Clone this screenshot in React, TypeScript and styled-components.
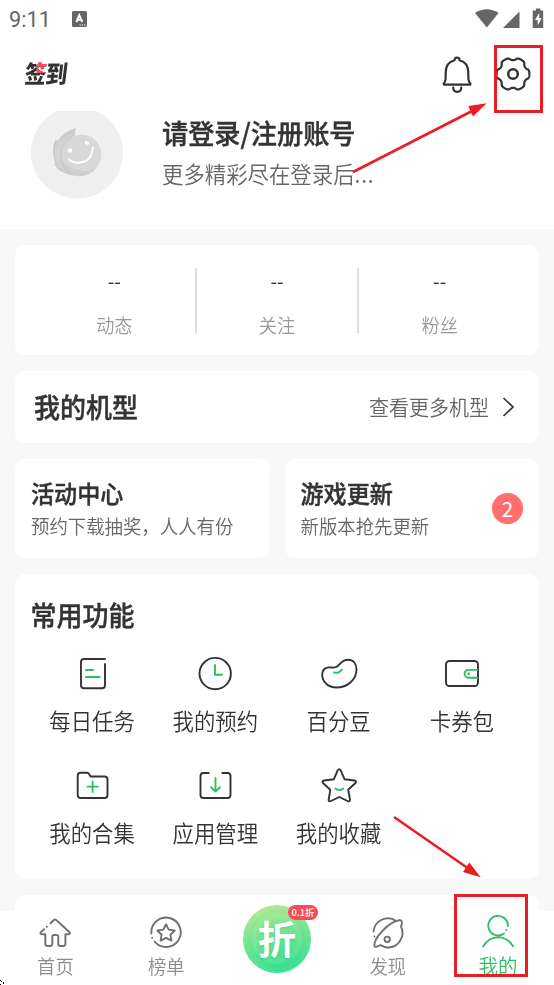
import React from 'react';
import styled, { createGlobalStyle, css } from 'styled-components';

const GlobalStyle = createGlobalStyle`
  * { box-sizing: border-box; }
  body {
    margin: 0;
    background: #f8f8f8;
    color: #333;
    font-family: "Noto Sans CJK SC", sans-serif;
    overflow: hidden;
  }
  svg { display: block; flex: none; }
`;

const GREEN = '#2fbf63';
const INK = '#333333';
const RED = '#ed1c24';

const tall = css`
  display: block;
  white-space: nowrap;
  transform: scaleY(1.05);
`;

const Screen = styled.div`
  position: relative;
  width: 554px;
  height: 985px;
  overflow: hidden;
  display: flex;
  flex-direction: column;
`;

const Header = styled.header`
  height: 229px;
  background: #fff;
  flex: none;
`;

const StatusBar = styled.div`
  height: 38px;
  padding: 0 10px 0 9px;
  display: flex;
  align-items: center;
  justify-content: space-between;
`;

const StatusGroup = styled.div`
  display: flex;
  align-items: center;
  gap: 21px;
`;

const Clock = styled.span`
  padding-top: 2px;
  font: 400 21.7px/36px Roboto, sans-serif;
  color: #666;
`;

const TopBar = styled.div`
  height: 73px;
  padding: 0 22px 0 25px;
  display: flex;
  align-items: center;
  justify-content: space-between;
`;

const SignIn = styled.div`
  margin-bottom: 3px;
  font-size: 21.7px;
  font-weight: 900;
  line-height: 28px;
  letter-spacing: -0.8px;
  transform: skewX(-7deg) scaleY(1.12);
  color: transparent;
  background: linear-gradient(#f5505a, #f5505a) 11px 0 / 11px 14px no-repeat, ${INK};
  -webkit-background-clip: text;
  background-clip: text;
`;

const TopActions = styled.div`
  display: flex;
  gap: 21px;
`;

const Profile = styled.div`
  display: flex;
  padding-left: 31px;
  gap: 39px;
`;

const AvatarClip = styled.div`
  width: 92px;
  height: 88px;
  overflow: hidden;
`;

const ProfileText = styled.div`
  padding-top: 1px;
`;

const Title = styled.h1`
  ${tall}
  margin: 0;
  font-size: 26.2px;
  line-height: 40px;
  font-weight: 500;
  -webkit-text-stroke: 0.4px ${INK};
`;

const Subtitle = styled.p`
  ${tall}
  margin: 0;
  font-size: 21.4px;
  line-height: 43px;
  font-weight: 350;
  color: #666;
`;

const Ellipsis = styled.span`
  letter-spacing: 0.9px;
`;

const Content = styled.main`
  padding: 16px 15px 0;
  display: flex;
  flex-direction: column;
  gap: 16px;
`;

const Card = styled.section<{ $h: number }>`
  flex: 1 1 0;
  min-width: 0;
  min-height: ${p => p.$h}px;
  background: #fff;
  border-radius: 10px;
`;

const Stats = styled(Card)`
  display: flex;
  align-items: center;
  padding: 0 19px;
`;

const Stat = styled.div`
  flex: 1;
  height: 65px;
  display: flex;
  flex-direction: column;
  align-items: center;
  & + & { border-left: 2px solid #dedede; }
`;

const StatValue = styled.span`
  ${tall}
  font-size: 19px;
  line-height: 25px;
`;

const StatLabel = styled.span`
  ${tall}
  margin-top: 19px;
  font-size: 18.2px;
  line-height: 26px;
  font-weight: 350;
  color: #999;
`;

const Device = styled(Card)`
  display: flex;
  align-items: center;
  padding: 0 23px 0 19px;
`;

const Heading = styled.h2<{ $size?: number }>`
  ${tall}
  margin: -2px 0 0;
  font-size: ${p => p.$size ?? 26}px;
  line-height: 36px;
  font-weight: 500;
  -webkit-text-stroke: 0.4px ${INK};
`;

const More = styled.span`
  ${tall}
  margin: 0 12px 0 auto;
  font-size: 20px;
  line-height: 30px;
  font-weight: 350;
  color: #666;
`;

const CardRow = styled.div`
  display: flex;
  gap: 15px;
`;

const Promo = styled(Card)`
  display: flex;
  align-items: center;
  justify-content: space-between;
  padding: 0 16px;
`;

const PromoNote = styled.p`
  ${tall}
  margin: 0;
  font-size: 18.4px;
  line-height: 32px;
  font-weight: 350;
  color: #666;
`;

const Count = styled.span`
  width: 31px;
  height: 31px;
  border-radius: 50%;
  background: #ff6f6f;
  color: #fff;
  font: 400 20.5px/31px "Noto Sans CJK SC", sans-serif;
  text-align: center;
`;

const Functions = styled(Card)`
  padding: 24px 15.5px 0;
`;

const Grid = styled.div`
  display: grid;
  grid-template-columns: repeat(4, 1fr);
  grid-auto-rows: 112px;
  margin-top: 22px;
`;

const Tile = styled.div`
  display: flex;
  flex-direction: column;
  align-items: center;
`;

const TileLabel = styled.span`
  ${tall}
  margin-top: 12px;
  font-size: 21.4px;
  line-height: 30px;
  font-weight: 350;
`;

const NavBar = styled.nav`
  position: absolute;
  left: 0;
  bottom: 0;
  width: 554px;
  height: 74px;
  background: #fff;
  display: grid;
  grid-template-columns: repeat(5, 1fr);
`;

const NavItem = styled.div<{ $active?: boolean }>`
  display: flex;
  flex-direction: column;
  align-items: center;
  padding: 2px ${p => (p.$active ? 1 : 0)}px 0 0;
  color: ${p => (p.$active ? GREEN : '#707070')};
`;

const NavLabel = styled.span<{ $active?: boolean }>`
  ${tall}
  font-size: ${p => (p.$active ? 19.5 : 18.3)}px;
  line-height: 26px;
  font-weight: 350;
  color: ${p => (p.$active ? GREEN : '#8c8c8c')};
`;

const Deal = styled.div`
  position: relative;
  justify-self: center;
  width: 68px;
  height: 68px;
  margin-top: -6px;
  border-radius: 50%;
  background:
    radial-gradient(circle, transparent 20px, #ffffff12 20px 25px, transparent 25px 29px, #ffffff0c 29px),
    linear-gradient(165deg, #aee98f 8%, #73e391 45%, #2ce08f 92%);
  color: #fff;
  font-size: 38.5px;
  line-height: 65px;
  font-weight: 700;
  text-align: center;
  text-shadow: 0 1px 2px #159f5a50;
`;

const DealTag = styled.span`
  position: absolute;
  left: 45px;
  top: 0;
  width: 30px;
  height: 15px;
  border-radius: 8px;
  background: #fa4b55;
  font-size: 9.4px;
  line-height: 15px;
  font-weight: 500;
  text-shadow: none;
`;

const Annotations = styled.svg`
  position: absolute;
  inset: 0;
  pointer-events: none;
`;

const gearPath = (() => {
  const pts: string[] = [];
  for (let i = 0; i < 180; i++) {
    const t = (i / 180) * Math.PI * 2;
    const r = 15 + 1.4 * Math.tanh(2 * (Math.cos(6 * t) + 0.4));
    pts.push(`${(18 + r * Math.cos(t)).toFixed(2)} ${(18 + r * Math.sin(t)).toFixed(2)}`);
  }
  return `M${pts.join('L')}Z`;
})();

const LineIcon = ({ children }: { children: React.ReactNode }) => (
  <svg width="40" height="40" viewBox="0 0 40 40" fill="none" stroke={INK} strokeWidth="1.900" strokeLinecap="round" strokeLinejoin="round">
    {children}
  </svg>
);

const NavIcon = ({ children }: { children: React.ReactNode }) => (
  <svg width="40" height="40" viewBox="0 0 40 40" fill="none" stroke="currentColor" strokeWidth="1.900" strokeLinecap="round" strokeLinejoin="round">
    {children}
  </svg>
);

const tiles = [
  {
    label: '每日任务',
    icon: <><path d="M33 5H12a3 3 0 0 0-3 3V31.300a3 3 0 0 0 3 3H30a3 3 0 0 0 3-3V10" /><path stroke={GREEN} strokeWidth="2.200" d="M14 16h7M14 23h13.500" /></>,
  },
  {
    label: '我的预约',
    icon: <><circle cx="20.200" cy="19.600" r="15.700" /><path stroke={GREEN} strokeLinejoin="miter" d="M20 11v9.800h7" /></>,
  },
  {
    label: '百分豆',
    icon: <><path d="M3.200 20.500C3.200 16 6 13.400 10 13.400C13 13.400 14.500 14 17 13.200C21 12 21.500 5.800 29 5.800C34.500 5.800 37.500 10 37.500 15.500C37.500 26 28 33.500 17.500 33.500C9 33.500 3.200 28 3.200 20.500Z" /><path stroke={GREEN} d="M15 18.400C18 19.500 21.500 18 22.800 15.500" /></>,
  },
  {
    label: '卡券包',
    icon: <><rect x="4" y="7" width="32" height="25" rx="3.500" /><path stroke={GREEN} d="M35.500 15.900H26.500a3.900 3.900 0 0 0 0 7.800h9" /><circle cx="26.700" cy="19.800" r="1.400" fill={GREEN} stroke="none" /></>,
  },
  {
    label: '我的合集',
    icon: <><path d="M8.700 6.800H15a2.500 2.500 0 0 1 2.200 1.500L18.500 10.500H32.500a3 3 0 0 1 3 3V29a3 3 0 0 1-3 3H8.700a3 3 0 0 1-3-3V9.800a3 3 0 0 1 3-3Z" /><path stroke={GREEN} strokeWidth="1.800" d="M20.600 15.500v10.500M15.400 20.700h10.400" /></>,
  },
  {
    label: '应用管理',
    icon: <><path d="M13.700 7H8.500a3 3 0 0 0-3 3V29a3 3 0 0 0 3 3H32.500a3 3 0 0 0 3-3V10a3 3 0 0 0-3-3H27.300" /><path stroke={GREEN} d="M20.500 12V25.500M16 21.300l4.500 4.200 4.500-4.200" /></>,
  },
  {
    label: '我的收藏',
    icon: <><path d="M18.700 4.300Q20.300 2 21.700 4.300L25.500 13.200L35.500 14.500Q38.300 15.200 36.200 17.200L29.200 23.800L31 33.500Q31 36.300 28.500 35L20.300 31L12 35Q9.400 36.200 9.700 33.500L11.300 23.800L4.200 17.200Q2.500 15 5 14.500L14.900 13.200Z" /><path stroke={GREEN} d="M16.400 22.400Q20.300 25.600 24.300 22.400" /></>,
  },
];

const navLeft = [
  {
    label: '首页',
    icon: <><path d="M15.500 10.200L19 7Q20.100 6.100 21.200 7L34.600 19.200Q35.800 21 33.500 21.200H30.400V30.500Q30.400 33 28 33H25.400Q23.300 33 23.300 30.800V23.800Q23.300 22 21.500 22H19Q17.300 22 17.300 23.800V30.800Q17.300 33 15 33H12.800Q10.300 33 10.300 30.500V21.200H6.800Q4.500 21 5.800 19.200L9.200 16.100" /><path d="M11.800 13.700h.1" /></>,
  },
  {
    label: '榜单',
    icon: <><path d="M5.400 20.500A14.700 14.700 0 1 1 8.600 28.500M6.200 24.800v.1" /><path d="M20 11.300L22.700 16.600L28.700 17.500L24.400 21.700L25.400 27.600L20 24.800L14.600 27.600L15.600 21.700L11.300 17.500L17.300 16.600Z" /></>,
  },
];

export default function App() {
  return (
    <Screen>
      <GlobalStyle />
      <Header>
        <StatusBar>
          <StatusGroup>
            <Clock>9:11</Clock>
            <svg width="15" height="16" viewBox="0 0 15 16">
              <rect width="15" height="16" rx="1.500" fill="#666" />
              <path d="M4.300 11L7.300 4.200 10.300 11M5.400 8.900h3.800" fill="none" stroke="#fff" strokeWidth="1.900" />
              <path d="M7.500 14h6" stroke="#fff" strokeDasharray="1.300 1" />
            </svg>
          </StatusGroup>
          <svg width="69" height="22" viewBox="0 0 69 22" fill="#666">
            <path d="M0 5Q11.500-2.500 23.500 5L11.800 19.500Z" />
            <path d="M44.500 3.500V20H28Z" />
            <path d="M61 .5h4.500v2H68.200V20H57.700V2.500H61Z" />
            <path d="M64.200 5L60 12H62.700V17.500L66.700 10H64.200Z" fill="#fff" />
          </svg>
        </StatusBar>
        <TopBar>
          <SignIn>签到</SignIn>
          <TopActions>
            <svg width="36" height="40" viewBox="0 0 36 40" fill="none" stroke={INK} strokeWidth="2.200" strokeLinecap="round" strokeLinejoin="round">
              <path d="M15.500 5.200Q15.500 2.700 18 2.700Q20.500 2.700 20.500 5.200C26 6.600 29.300 11 29.300 17.500C29.300 24.500 29.200 26 31.400 28.700Q31.600 29.700 30.400 29.700H5.700Q4.500 29.700 4.700 28.700C6.800 26 6.700 24.500 6.700 17.500C6.700 11 10 6.600 15.500 5.200Z" />
              <path d="M14.200 32.500C14.400 38.200 22 38.200 22.300 32.500" />
            </svg>
            <svg width="36" height="38" viewBox="1 -1 36 38" fill="none" stroke={INK} strokeWidth="2.200">
              <path d={gearPath} />
              <circle cx="18" cy="18" r="4.800" strokeWidth="2.500" />
            </svg>
          </TopActions>
        </TopBar>
        <Profile>
          <AvatarClip>
            <svg width="92" height="88" viewBox="0 0 92 88">
              <circle cx="46" cy="41.500" r="46" fill="#efefef" />
              <path d="M44.700 17Q32 21 27 30L24.500 28.500Q19.500 38 24.500 53L23 52.500Q27 60 34 62Q42 66 50 65Q60 64 66 56L42 36Q43 28 43.500 25Z" fill="#cacaca" />
              <path d="M43 23Q30 31 29 45Q28 54 36 62Q30 60 27 54Q20 43 27 31Q34 24 43 23Z" fill="#d3d3d3" />
              <circle cx="50.500" cy="43.500" r="19.800" fill="#d8d8d8" />
              <path d="M32 51Q38 58 53 60Q60 61 65 56Q58 66 45 65Q35 61 32 51Z" fill="#cfcfcf" />
              <path d="M38 48.500Q43 53 52 51Q61 49 62 36.500" fill="none" stroke="#fff" strokeWidth="1.900" strokeLinecap="round" />
              <ellipse cx="39" cy="39.500" rx="2.100" ry="2.300" fill="#fff" />
              <ellipse cx="56" cy="32" rx="2.500" ry="1.600" fill="#fff" transform="rotate(15 56 32)" />
            </svg>
          </AvatarClip>
          <ProfileText>
            <Title>请登录/注册账号</Title>
            <Subtitle>更多精彩尽在登录后<Ellipsis>...</Ellipsis></Subtitle>
          </ProfileText>
        </Profile>
      </Header>

      <Content>
        <Stats $h={110}>
          {['动态', '关注', '粉丝'].map(s => (
            <Stat key={s}>
              <StatValue>--</StatValue>
              <StatLabel>{s}</StatLabel>
            </Stat>
          ))}
        </Stats>

        <Device $h={72}>
          <Heading>我的机型</Heading>
          <More>查看更多机型</More>
          <svg width="15" height="22" viewBox="0 0 15 22" fill="none" stroke={INK} strokeWidth="1.700">
            <path d="M2.500 2L12 11L2.500 20" />
          </svg>
        </Device>

        <CardRow>
          <Promo $h={99}>
            <div>
              <Heading $size={23.1}>活动中心</Heading>
              <PromoNote>预约下载抽奖，人人有份</PromoNote>
            </div>
          </Promo>
          <Promo $h={99}>
            <div>
              <Heading $size={23.1}>游戏更新</Heading>
              <PromoNote>新版本抢先更新</PromoNote>
            </div>
            <Count>2</Count>
          </Promo>
        </CardRow>

        <Functions $h={305}>
          <Heading>常用功能</Heading>
          <Grid>
            {tiles.map(t => (
              <Tile key={t.label}>
                <LineIcon>{t.icon}</LineIcon>
                <TileLabel>{t.label}</TileLabel>
              </Tile>
            ))}
          </Grid>
        </Functions>

        <Card $h={90} />
      </Content>

      <NavBar>
        {navLeft.map(n => (
          <NavItem key={n.label}>
            <NavIcon>{n.icon}</NavIcon>
            <NavLabel>{n.label}</NavLabel>
          </NavItem>
        ))}
        <Deal>
          折<DealTag>0.1折</DealTag>
        </Deal>
        <NavItem>
          <NavIcon>
            <path d="M5.500 18.500A14.500 14.500 0 0 1 28 7.800M6.500 23.500v.1" />
            <path d="M6.300 32C6.800 24 21 9 31 7.300Q34.300 6.700 34 10.500L33 13.500C37.500 23 31 34.500 20 34.500C16 34.500 14.500 32.500 12.500 32.200L8.200 33.800Q6.300 34 6.300 32Z" />
            <circle cx="19.200" cy="26.300" r="2.700" />
          </NavIcon>
          <NavLabel>发现</NavLabel>
        </NavItem>
        <NavItem $active>
          <NavIcon>
            <path d="M29.900 13A9.800 9.800 0 1 0 26 20.500M28.300 16.800v.1M5.300 33.200C12.500 21.400 27.800 21.400 35 33.200" />
          </NavIcon>
          <NavLabel $active>我的</NavLabel>
        </NavItem>
      </NavBar>

      <Annotations width="554" height="985" viewBox="0 0 554 985" fill="none" stroke={RED} strokeWidth="3">
        <rect x="495.500" y="46.500" width="46" height="65" />
        <rect x="455.500" y="895.500" width="71" height="80" />
        <path d="M353 172L474 110M394 817L469 869" strokeWidth="2.600" />
        <path d="M486.700 103.300L468.300 106L473 116.500ZM480.700 877.200L469.300 862.500L463 872Z" fill={RED} stroke="none" />
        <path d="M0 980h1v1h1v1h-1v-1h-1zM3 982h1v2h-1zM0 984h1v1h-1z" fill="#000" stroke="none" />
      </Annotations>
    </Screen>
  );
}
